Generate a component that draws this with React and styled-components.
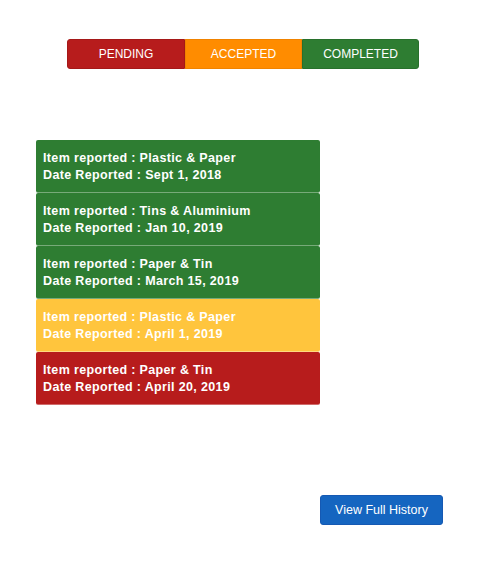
import React, { useState } from 'react';
import styled, { createGlobalStyle } from 'styled-components';

const GlobalStyle = createGlobalStyle`
  html, body {
    margin: 0;
    padding: 0;
    background: #ffffff;
    font-family: "Liberation Sans", Arial, sans-serif;
  }
`;

const Page = styled.div`
  width: 493px;
  min-height: 586px;
  display: flex;
  flex-direction: column;
`;

const Tabs = styled.div`
  display: flex;
  margin: 39px 0 0 67px;
`;

const Tab = styled.button`
  width: 117px;
  height: 30px;
  padding: 0;
  border: 1px solid ${props => props.$border};
  background: ${props => props.$bg};
  color: #ffffff;
  font-family: "Liberation Sans", Arial, sans-serif;
  font-size: 12px;
  text-transform: uppercase;
  cursor: pointer;
  border-radius: 0;

  &:first-child {
    border-radius: 3px 0 0 3px;
    width: 118px;
  }
  &:last-child {
    border-radius: 0 3px 3px 0;
  }
`;

const ReportList = styled.div`
  display: flex;
  flex-direction: column;
  width: 284px;
  margin: 71px 0 0 36px;
`;

const ReportCard = styled.div`
  height: 53px;
  box-sizing: border-box;
  padding: 10px 7px 0;
  background: ${props => props.$bg};
  border-radius: 2px;
  border-bottom: 1px solid rgba(255, 255, 255, 0.35);
  color: #ffffff;
  font-size: 12.5px;
  font-weight: bold;
  line-height: 17px;
  letter-spacing: 0.35px;
`;

const Footer = styled.div`
  display: flex;
  margin: 90px 0 0 320px;
`;

const HistoryButton = styled.button`
  width: 123px;
  height: 30px;
  padding: 0;
  border: 1px solid #1559b3;
  border-radius: 3px;
  background: #1565c0;
  color: #ffffff;
  font-family: "Liberation Sans", Arial, sans-serif;
  font-size: 12.5px;
  cursor: pointer;
`;

const statusColors = {
  completed: '#2e7d32',
  accepted: '#ffc53d',
  pending: '#b71c1c',
};

const reports = [
  { id: 1, item: 'Plastic & Paper', date: 'Sept 1, 2018', status: 'completed' },
  { id: 2, item: 'Tins & Aluminium', date: 'Jan 10, 2019', status: 'completed' },
  { id: 3, item: 'Paper & Tin', date: 'March 15, 2019', status: 'completed' },
  { id: 4, item: 'Plastic & Paper', date: 'April 1, 2019', status: 'accepted' },
  { id: 5, item: 'Paper & Tin', date: 'April 20, 2019', status: 'pending' },
];

const tabs = [
  { key: 'pending', label: 'Pending', bg: '#b71c1c', border: '#a51818' },
  { key: 'accepted', label: 'Accepted', bg: '#ff8c00', border: '#f08300' },
  { key: 'completed', label: 'Completed', bg: '#2e7d32', border: '#28702c' },
];

const App = () => {
  const [active, setActive] = useState(null);

  return (
    <Page>
      <GlobalStyle />
      <Tabs>
        {tabs.map(tab => (
          <Tab
            key={tab.key}
            $bg={tab.bg}
            $border={tab.border}
            onClick={() => setActive(tab.key)}
          >
            {tab.label}
          </Tab>
        ))}
      </Tabs>

      {/* all reports stay listed; the tabs only mark the chosen status */}
      <ReportList data-active={active || ''}>
        {reports.map(report => (
          <ReportCard key={report.id} $bg={statusColors[report.status]}>
            <div>Item reported : {report.item}</div>
            <div>Date Reported : {report.date}</div>
          </ReportCard>
        ))}
      </ReportList>

      <Footer>
        <HistoryButton>View Full History</HistoryButton>
      </Footer>
    </Page>
  );
};

export default App;
